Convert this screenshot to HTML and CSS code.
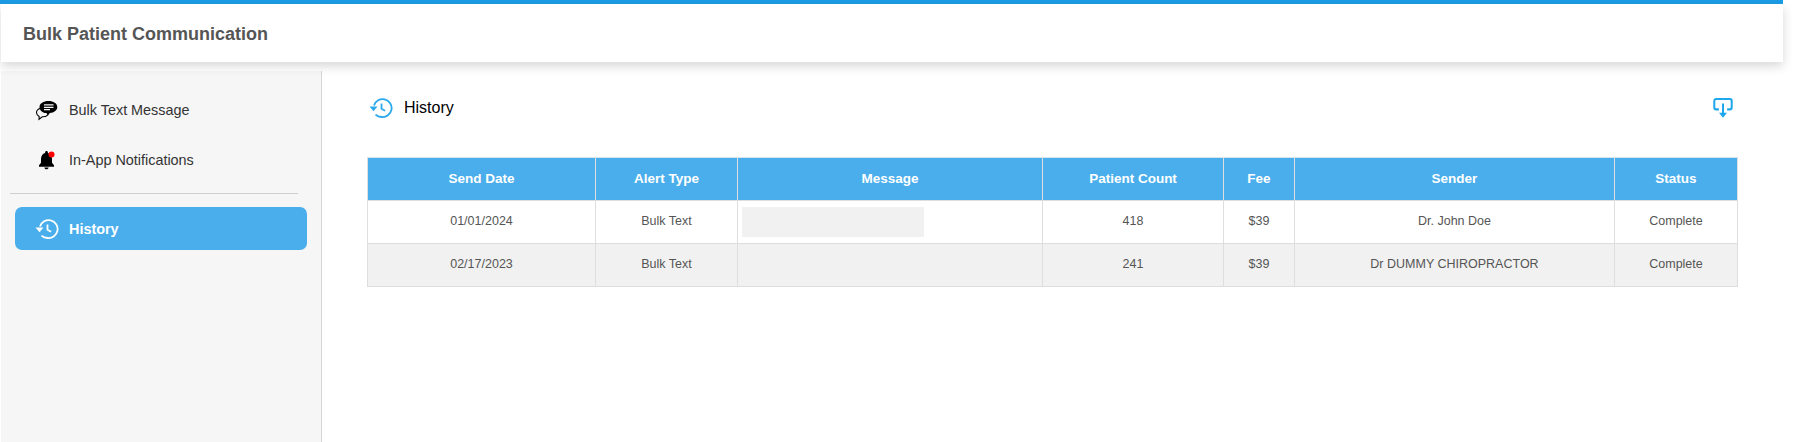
FILE: index.html
```html
<!DOCTYPE html>
<html lang="en">
<head>
<meta charset="utf-8">
<title>Bulk Patient Communication</title>
<link rel="stylesheet" href="styles.css">
</head>
<body>
<svg class="defs" width="0" height="0"><symbol id="hist" viewBox="0 0 24 24"><path fill="none" stroke="currentColor" stroke-width="1.800" d="M5 9.500A9 9 0 1 1 12.500 21a9 9 0 0 1-6-2.400M12.500 7.500v5.300l3.600 2"/><path fill="currentColor" d="M0.500 10.500h8l-4 4.700z"/></symbol></svg>
<div class="topline"></div>
<header class="header"><h1 class="title">Bulk Patient Communication</h1></header>
<div class="layout">
  <aside class="sidebar">
    <nav class="nav">
      <a class="nav-item">
        <svg class="nav-icon" viewBox="0 0 24 24"><path fill="none" stroke="#000" stroke-width="1.100" d="M5.500 10.200C3 11 1.500 12.500 1.500 14.600c0 1.700 1 3 2.700 3.800L4 21.300l3.300-2.500c2.200.1 4.200-.6 5.500-2"/><path fill="#000" d="M13.500 3C8.500 3 4.500 5.300 4.500 9.200c0 2.400 1.500 4.200 3.800 5.200.9.400 2 .6 3.200.7l1.300 2.600 2-2.700c4.400-.4 7.500-2.800 7.500-5.800C22.300 5.300 18.500 3 13.500 3z"/><path stroke="#f6f6f6" stroke-width="1.300" fill="none" d="M9 6.900h9.500M9 9.300h9.500M9 11.700h6"/></svg>
        <span>Bulk Text Message</span>
      </a>
      <a class="nav-item">
        <svg class="nav-icon" viewBox="0 0 24 24"><path fill="#000" d="M11.500 3c-.8 0-1.400.6-1.400 1.400v.7C7.400 5.900 6 8.200 6 11v3.800l-2 2.500v1.400h15v-1.400l-2-2.500V11c0-2.800-1.400-5.100-4.100-5.900v-.7c0-.8-.6-1.400-1.400-1.400zM9.400 19.500c0 1.100.9 1.800 2.100 1.800s2.100-.7 2.100-1.800z"/><circle cx="16.500" cy="6.500" r="3" fill="#f00"/></svg>
        <span>In-App Notifications</span>
      </a>
      <hr class="divider">
      <a class="nav-item active">
        <svg class="nav-icon" viewBox="0 0 24 24"><use href="#hist"/></svg>
        <span>History</span>
      </a>
    </nav>
  </aside>
  <main class="content">
    <div class="page-head">
      <div class="page-title">
        <svg class="page-icon" viewBox="0 0 24 24"><use href="#hist"/></svg>
        <span>History</span>
      </div>
      <svg class="export" viewBox="0 0 24 24"><path fill="none" stroke="#1ea7ec" stroke-width="2.200" d="M7.500 13.500H4.500a2 2 0 0 1-2-2V4.200a2 2 0 0 1 2-2h15a2 2 0 0 1 2 2v7.300a2 2 0 0 1-2 2h-3M12 7v13"/><path fill="#1ea7ec" d="M7.600 17.300h8.800L12 22.500z"/></svg>
    </div>
    <table class="grid">
      <colgroup><col class="c1"><col class="c2"><col class="c3"><col class="c4"><col class="c5"><col class="c6"><col class="c7"></colgroup>
      <thead>
        <tr><th>Send Date</th><th>Alert Type</th><th>Message</th><th>Patient Count</th><th>Fee</th><th>Sender</th><th>Status</th></tr>
      </thead>
      <tbody>
        <tr><td>01/01/2024</td><td>Bulk Text</td><td class="msg"><div class="redacted"></div></td><td>418</td><td>$39</td><td>Dr. John Doe</td><td>Complete</td></tr>
        <tr class="alt"><td>02/17/2023</td><td>Bulk Text</td><td class="msg"></td><td>241</td><td>$39</td><td>Dr DUMMY CHIROPRACTOR</td><td>Complete</td></tr>
      </tbody>
    </table>
  </main>
</div>
</body>
</html>
```
FILE: styles.css
```css
* { box-sizing: border-box; }
html, body { height: 100%; }
body {
  margin: 0;
  height: 442px;
  overflow: hidden;
  background: #fff;
  font-family: "Liberation Sans", Arial, sans-serif;
  display: flex;
  flex-direction: column;
}
.defs { position: absolute; }
.topline { height: 4px; margin-right: 24px; background: #1b9ce6; flex: none; }
.header {
  flex: none;
  height: 58px;
  margin: 0 24px 0 1px;
  padding: 2px 0 0 22px;
  display: flex;
  align-items: center;
  background: #fff;
  box-shadow: 0 4px 10px rgba(0, 0, 0, 0.16);
  position: relative;
}
.title { margin: 0; font-size: 18px; font-weight: 700; color: #555; }
.layout { flex: 1; display: flex; margin-top: 9px; min-height: 0; }
.sidebar {
  width: 321px;
  margin-left: 1px;
  background: #f6f6f6;
  border-right: 1px solid #d6d6d6;
  flex: none;
  padding-top: 14px;
}
.nav { display: flex; flex-direction: column; }
.nav-item {
  height: 50px;
  display: flex;
  align-items: center;
  gap: 10px;
  margin: 0 14px;
  padding-left: 20px;
  font-size: 14.4px;
  color: #333;
  border-radius: 7px;
}
.nav-icon { width: 24px; height: 24px; flex: none; color: #fff; }
.divider {
  width: 288px;
  margin: 8px 0 13px 9px;
  border: 0;
  border-top: 1px solid #cfcfcf;
}
.nav-item.active {
  height: 43px;
  background: #49aeeb;
  color: #fff;
  font-weight: 700;
}
.content { flex: 1; padding: 0 70px 0 45px; min-width: 0; }
.page-head {
  display: flex;
  justify-content: space-between;
  align-items: flex-start;
  height: 86px;
  padding-top: 25px;
}
.page-title { display: flex; align-items: center; gap: 11px; padding-left: 2px; font-size: 16px; color: #000; }
.page-icon { width: 24px; height: 24px; color: #2aa9ec; }
.export { width: 22px; height: 22px; margin: 1px 3px 0 0; }
.grid {
  width: 1370px;
  border-collapse: collapse;
  table-layout: fixed;
  font-size: 12.5px;
  color: #555;
  text-align: center;
}
.c1 { width: 228px; } .c2 { width: 142px; } .c3 { width: 305px; } .c4 { width: 181px; }
.c5 { width: 71px; } .c6 { width: 320px; } .c7 { width: 123px; }
.grid th {
  height: 43px;
  background: #49aeeb;
  color: #fff;
  font-size: 13.5px;
  font-weight: 700;
  border: 1px solid #dedede;
  border-top-color: #d5e5ef;
  padding: 0 0 2px;
}
.grid td { height: 43px; border: 1px solid #dedede; padding: 0 0 2px; }
.alt td { background: #f1f1f1; }
.grid .msg { padding: 0 4px; }
.redacted { width: 182px; height: 30px; background: #f1f1f1; }
```
